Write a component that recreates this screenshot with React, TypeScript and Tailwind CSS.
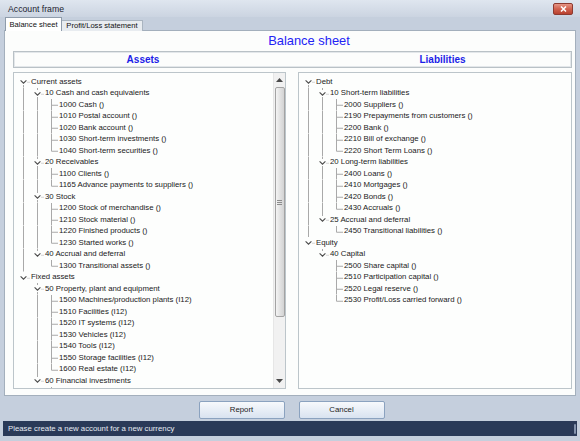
import React from "react";

type TNode = { label: string; children?: TNode[] };

const assets: TNode[] = [
  {
    label: "Current assets",
    children: [
      {
        label: "10 Cash and cash equivalents",
        children: [
          { label: "1000 Cash ()" },
          { label: "1010 Postal account ()" },
          { label: "1020 Bank account ()" },
          { label: "1030 Short-term investments ()" },
          { label: "1040 Short-term securities ()" },
        ],
      },
      {
        label: "20 Receivables",
        children: [{ label: "1100 Clients ()" }, { label: "1165 Advance payments to suppliers ()" }],
      },
      {
        label: "30 Stock",
        children: [
          { label: "1200 Stock of merchandise ()" },
          { label: "1210 Stock material ()" },
          { label: "1220 Finished products ()" },
          { label: "1230 Started works ()" },
        ],
      },
      { label: "40 Accrual and deferral", children: [{ label: "1300 Transitional assets ()" }] },
    ],
  },
  {
    label: "Fixed assets",
    children: [
      {
        label: "50 Property, plant and equipment",
        children: [
          { label: "1500 Machines/production plants (I12)" },
          { label: "1510 Facilities (I12)" },
          { label: "1520 IT systems (I12)" },
          { label: "1530 Vehicles (I12)" },
          { label: "1540 Tools (I12)" },
          { label: "1550 Storage facilities (I12)" },
          { label: "1600 Real estate (I12)" },
        ],
      },
      {
        label: "60 Financial investments",
        children: [{ label: "1700 Participations ()" }],
      },
    ],
  },
];

const liabilities: TNode[] = [
  {
    label: "Debt",
    children: [
      {
        label: "10 Short-term liabilities",
        children: [
          { label: "2000 Suppliers ()" },
          { label: "2190 Prepayments from customers ()" },
          { label: "2200 Bank ()" },
          { label: "2210 Bill of exchange ()" },
          { label: "2220 Short Term Loans ()" },
        ],
      },
      {
        label: "20 Long-term liabilities",
        children: [
          { label: "2400 Loans ()" },
          { label: "2410 Mortgages ()" },
          { label: "2420 Bonds ()" },
          { label: "2430 Accruals ()" },
        ],
      },
      { label: "25 Accrual and deferral", children: [{ label: "2450 Transitional liabilities ()" }] },
    ],
  },
  {
    label: "Equity",
    children: [
      {
        label: "40 Capital",
        children: [
          { label: "2500 Share capital ()" },
          { label: "2510 Participation capital ()" },
          { label: "2520 Legal reserve ()" },
          { label: "2530 Profit/Loss carried forward ()" },
        ],
      },
    ],
  },
];

type Row = {
  label: string;
  hasChildren: boolean;
  isLast: boolean;
  isFirstRoot: boolean;
  ancestorsLast: boolean[];
};

function flatten(nodes: TNode[], depth: number, ancestorsLast: boolean[], out: Row[]) {
  nodes.forEach((n, i) => {
    const isLast = i === nodes.length - 1;
    out.push({
      label: n.label,
      hasChildren: !!(n.children && n.children.length),
      isLast,
      isFirstRoot: depth === 0 && i === 0,
      ancestorsLast,
    });
    if (n.children) flatten(n.children, depth + 1, [...ancestorsLast, isLast], out);
  });
}

const LINE = "#a9a9a9";

function Cell({ children }: { children?: React.ReactNode }) {
  return (
    <svg width="14" height="11.5" viewBox="0 0 14 11.5" className="shrink-0 block">
      {children}
    </svg>
  );
}

function TreeRow({ row }: { row: Row }) {
  return (
    <div className="flex h-[11.5px] items-center">
      {row.ancestorsLast.map((last, k) => (
        <Cell key={k}>{!last && <line x1="7.5" y1="0" x2="7.5" y2="11.5" stroke={LINE} strokeWidth="1" />}</Cell>
      ))}
      <Cell>
        {row.hasChildren ? (
          <>
            {!row.isFirstRoot && row.ancestorsLast.length > 0 && (
              <line x1="7.5" y1="0" x2="7.5" y2="2" stroke={LINE} strokeWidth="1" />
            )}
            {!row.isLast && <line x1="7.5" y1="9" x2="7.5" y2="11.5" stroke={LINE} strokeWidth="1" />}
            <line x1="11.5" y1="6.25" x2="14" y2="6.25" stroke={LINE} strokeWidth="1" strokeDasharray="1 1" />
            <polyline points="4.6,4.3 7.5,7.2 10.4,4.3" fill="none" stroke="#4a4a4a" strokeWidth="1.1" />
          </>
        ) : (
          <>
            <line x1="7.5" y1="0" x2="7.5" y2={row.isLast ? 6.25 : 11.5} stroke={LINE} strokeWidth="1" />
            <line x1="7.5" y1="6.25" x2="14" y2="6.25" stroke={LINE} strokeWidth="1" />
          </>
        )}
      </Cell>
      <span className="ml-[1px] whitespace-nowrap text-[7.8px] leading-none text-[#1a1a1a]">{row.label}</span>
    </div>
  );
}

function Tree({ nodes }: { nodes: TNode[] }) {
  const rows: Row[] = [];
  flatten(nodes, 0, [], rows);
  return (
    <div className="flex-1 overflow-hidden pt-[3px] pl-[2px]">
      {rows.map((r, i) => (
        <TreeRow key={i} row={r} />
      ))}
    </div>
  );
}

function ScrollBar() {
  return (
    <div className="w-[12px] shrink-0 flex flex-col bg-[#f1f1f1] border-l border-[#e6e6e6]">
      <div className="h-[14px] flex items-center justify-center">
        <svg width="7" height="4" viewBox="0 0 7 4">
          <polygon points="0,4 3.5,0 7,4" fill="#4a4a4a" />
        </svg>
      </div>
      <div className="h-[230px] mx-[0.5px] rounded-[2px] border border-[#a3a3a3] bg-linear-to-r from-[#f4f4f4] via-[#e2e2e2] to-[#d3d3d3] flex items-center justify-center">
        <div className="flex flex-col gap-[1px]">
          <div className="w-[5px] h-px bg-[#8c8c8c]" />
          <div className="w-[5px] h-px bg-[#8c8c8c]" />
          <div className="w-[5px] h-px bg-[#8c8c8c]" />
        </div>
      </div>
      <div className="flex-1" />
      <div className="h-[14px] flex items-center justify-center">
        <svg width="7" height="4" viewBox="0 0 7 4">
          <polygon points="0,0 3.5,4 7,0" fill="#4a4a4a" />
        </svg>
      </div>
    </div>
  );
}

export default function App() {
  return (
    <div className="w-[580px] h-[441px] bg-[#c5cfdd] flex flex-col overflow-hidden font-['Liberation_Sans',Arial,sans-serif]">
      {/* title bar */}
      <div className="h-[17px] shrink-0 flex items-center justify-between pl-[8px] pr-[7px] bg-linear-to-b from-[#dfe6ef] to-[#cbd4e1]">
        <span className="text-[8.7px] text-[#1c2330] leading-none mt-[1px]">Account frame</span>
        <div className="w-[20px] h-[12px] mt-[1px] rounded-[2px] border border-[#8d3a30] bg-linear-to-b from-[#e59585] via-[#d0604d] to-[#b8412f] flex items-center justify-center">
          <svg width="7" height="6" viewBox="0 0 7 6">
            <path d="M1 0.5 L6 5.5 M6 0.5 L1 5.5" stroke="#fff" strokeWidth="1.5" />
          </svg>
        </div>
      </div>

      {/* tabs */}
      <div className="h-[14px] shrink-0 flex items-end pl-[5px] -mb-px relative z-10">
        <div className="h-[14px] w-[57px] bg-white border border-b-0 border-[#8f9cab] flex items-center justify-center">
          <span className="text-[7.6px] leading-none text-[#111]">Balance sheet</span>
        </div>
        <div className="h-[11px] w-[81px] bg-[#e8ecf0] border border-l-0 border-b-0 border-[#a9b4c0] flex items-center justify-center">
          <span className="text-[7.6px] leading-none text-[#111]">Profit/Loss statement</span>
        </div>
      </div>

      {/* panel */}
      <div className="mx-[4px] h-[366px] shrink-0 border border-[#a3afbc] bg-[#fcfdfc] flex flex-col">
        <div className="h-[20px] shrink-0 flex items-center justify-center pl-[38px]">
          <span className="text-[12.9px] leading-none text-[#2323f5]">Balance sheet</span>
        </div>
        <div className="ml-[8px] mr-[3px] h-[17px] shrink-0 border border-[#b9c1c6] shadow-[inset_1px_1px_0_#e3e7ea,inset_-1px_-1px_0_#e3e7ea] grid grid-cols-[258px_1fr] items-center">
          <span className="text-center text-[10px] font-bold leading-none text-[#1d1de8]">Assets</span>
          <span className="text-center pl-[42px] text-[10px] font-bold leading-none text-[#1d1de8]">Liabilities</span>
        </div>
        <div className="mt-[4px] ml-[8px] mr-[3px] h-[317px] shrink-0 flex gap-[12px]">
          <div className="w-[273px] h-full border border-[#bcc5ca] bg-[#fdfefd] flex overflow-hidden">
            <Tree nodes={assets} />
            <ScrollBar />
          </div>
          <div className="flex-1 h-full border border-[#bcc5ca] bg-[#fdfefd] flex overflow-hidden">
            <Tree nodes={liabilities} />
          </div>
        </div>
      </div>

      {/* buttons */}
      <div className="mt-[5px] h-[18px] shrink-0 flex justify-center gap-[14px] pl-[3px]">
        <button className="w-[86px] h-full rounded-[2px] border border-[#8ba2bf] bg-linear-to-b from-[#f7f9fc] to-[#d9e3f0] text-[7.8px] leading-none text-[#1b1b1b]">
          Report
        </button>
        <button className="w-[86px] h-full rounded-[2px] border border-[#8ba2bf] bg-linear-to-b from-[#f7f9fc] to-[#d9e3f0] text-[7.8px] leading-none text-[#1b1b1b]">
          Cancel
        </button>
      </div>

      {/* status bar */}
      <div className="mt-[2px] mx-[3px] h-[15px] shrink-0 bg-[#2a3a58] flex items-center justify-between pl-[5px] pr-[1px]">
        <span className="text-[7.8px] leading-none text-[#e6ebf3]">Please create a new account for a new currency</span>
        <div className="w-[2px] h-[10px] bg-[#8493ad] rounded-[1px]" />
      </div>
    </div>
  );
}
